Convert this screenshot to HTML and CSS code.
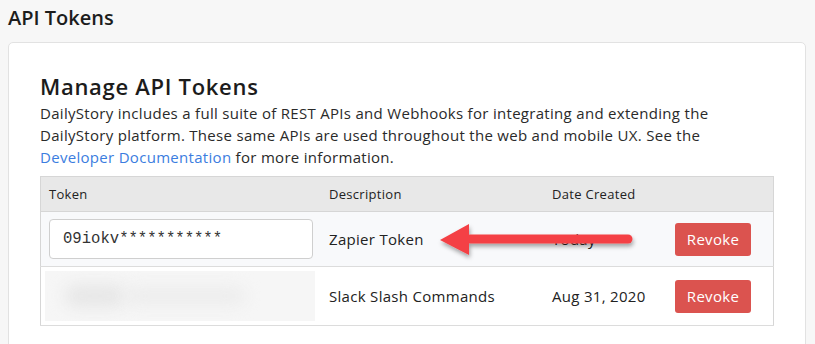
FILE: index.html
```html
<!DOCTYPE html>
<html lang="en">
<head>
    <meta charset="UTF-8">
    <meta name="viewport" content="width=device-width, initial-scale=1.0">
    <title>API Tokens</title>
    <link rel="stylesheet" href="styles.css">
</head>
<body>
    <h1 class="page-title">API Tokens</h1>

    <div class="card">
        <h2>Manage API Tokens</h2>
        <p class="intro">DailyStory includes a full suite of REST APIs and Webhooks for integrating and extending the DailyStory platform. These same APIs are used throughout the web and mobile UX. See the <a href="#">Developer Documentation</a> for more information.</p>

        <div class="table-wrap">
            <table class="tokens">
                <thead>
                    <tr>
                        <th class="col-token">Token</th>
                        <th class="col-desc">Description</th>
                        <th class="col-date">Date Created</th>
                        <th class="col-act"></th>
                    </tr>
                </thead>
                <tbody>
                    <tr class="striped">
                        <td><input type="text" class="token-input" value="09iokv***********" readonly></td>
                        <td>Zapier Token</td>
                        <td>Today</td>
                        <td><button class="revoke-btn">Revoke</button></td>
                    </tr>
                    <tr>
                        <td class="blurred-cell"><div class="blurred"><span class="smudge s1"></span><span class="smudge s2"></span></div></td>
                        <td>Slack Slash Commands</td>
                        <td>Aug 31, 2020</td>
                        <td><button class="revoke-btn">Revoke</button></td>
                    </tr>
                </tbody>
            </table>

            <!-- callout arrow pointing at the new token -->
            <svg class="arrow" width="210" height="50" viewBox="0 0 210 50">
                <defs>
                    <filter id="shadow" x="-10%" y="-30%" width="120%" height="170%">
                        <feDropShadow dx="1" dy="3" stdDeviation="2" flood-color="#000" flood-opacity="0.35"/>
                    </filter>
                </defs>
                <g filter="url(#shadow)">
                    <line x1="34" y1="21" x2="192" y2="21" stroke="#f44144" stroke-width="9" stroke-linecap="round"/>
                    <polygon points="4,22 33,6 33,37" fill="#f44144"/>
                </g>
            </svg>
        </div>
    </div>
</body>
</html>
```

FILE: styles.css
```css
body {
    margin: 0;
    padding: 0 9px 0 8px;
    background-color: #f7f7f7;
    font-family: "Open Sans", "Noto Sans", sans-serif;
    color: #222;
}
.page-title {
    margin: 0;
    padding-top: 4px;
    height: 38px;
    font-size: 20px;
    font-weight: 600;
    color: #1d1d1d;
    letter-spacing: 0;
}
.card {
    background-color: white;
    border: 1px solid #e2e2e2;
    border-radius: 5px;
    padding: 29px 31px 30px 31px;
    min-height: 300px;
}
h2 {
    margin: 0;
    font-size: 22px;
    font-weight: 600;
    color: #1c1c1c;
    line-height: 28px;
    letter-spacing: 0.7px;
}
.intro {
    margin: 2px 0 8px;
    font-size: 15px;
    line-height: 22px;
    letter-spacing: 0.3px;
    color: #2a2a2a;
    max-width: 705px;
}
.intro a {
    color: #3b7de0;
    text-decoration: none;
}
.table-wrap {
    position: relative;
    width: 734px;
}
.tokens {
    width: 734px;
    border-collapse: collapse;
    border: 1px solid #d6d6d6;
    font-size: 15px;
    letter-spacing: 0.3px;
    color: #222;
}
.tokens th {
    background-color: #e8e8e8;
    text-align: left;
    font-size: 13px;
    font-weight: 500;
    height: 34px;
    padding: 0 8px;
    border-bottom: 1px solid #d6d6d6;
}
.col-token { width: 264px; }
.col-desc { width: 207px; }
.col-date { width: 107px; }
.tokens td {
    padding: 0 8px;
    height: 54px;
    border-bottom: 1px solid #dcdcdc;
}
.tokens tr.striped td {
    background-color: #f8f9fb;
}
.token-input {
    box-sizing: border-box;
    width: 264px;
    height: 40px;
    padding: 0 13px;
    border: 1px solid #cfcfcf;
    border-radius: 4px;
    background: white;
    font-family: "Liberation Mono", monospace;
    font-size: 15.6px;
    letter-spacing: 0;
    color: #333;
}
.blurred-cell {
    padding: 2px 6px 2px 4px !important;
}
.blurred {
    position: relative;
    height: 50px;
    width: 270px;
    background-color: #f6f6f6;
    overflow: hidden;
}
.smudge {
    position: absolute;
    border-radius: 20px;
    filter: blur(8px);
}
.s1 {
    left: 20px;
    top: 14px;
    width: 60px;
    height: 22px;
    background-color: #e6e6e6;
}
.s2 {
    left: 80px;
    top: 16px;
    width: 120px;
    height: 18px;
    background-color: #ececec;
}
.revoke-btn {
    width: 76px;
    height: 33px;
    border: none;
    border-radius: 3px;
    background-color: #db534f;
    color: white;
    font-family: "Open Sans", sans-serif;
    font-size: 15px;
    font-weight: 500;
    letter-spacing: 0.3px;
}
.arrow {
    position: absolute;
    left: 396px;
    top: 42px;
}
```
